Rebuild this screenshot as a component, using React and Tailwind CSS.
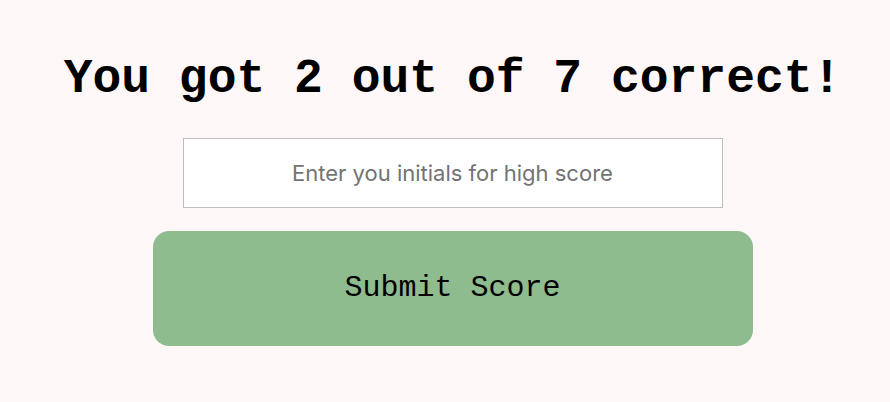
export default function App() {
  return (
    <div className="min-h-[402px] w-full bg-[#fdf8f7] flex flex-col items-center pt-[49px] pl-[15px]">
      <h1 className="font-['Liberation_Mono',monospace] font-bold text-[48px] leading-[60px] text-black">
        You got 2 out of 7 correct!
      </h1>
      <input
        type="text"
        placeholder="Enter you initials for high score"
        className="mt-[29px] w-[540px] h-[70px] bg-white border border-[#bdbdbd] text-center text-[22px] font-['Inter',sans-serif] placeholder:text-[#737373] outline-none"
      />
      <button className="mt-[23px] w-[600px] h-[115px] rounded-[16px] bg-[#8fbc8f] font-['Liberation_Mono',monospace] text-[30px] text-black">
        Submit Score
      </button>
    </div>
  );
}
